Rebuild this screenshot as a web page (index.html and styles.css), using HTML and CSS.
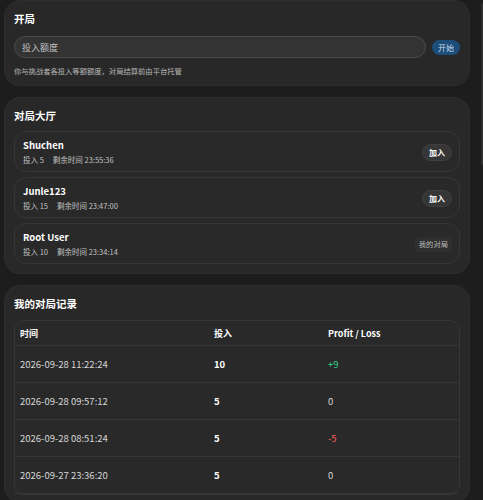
FILE: index.html
```html
<!DOCTYPE html>
<html lang="zh-CN">
<head>
    <meta charset="UTF-8">
    <title>对局</title>
    <link rel="stylesheet" href="styles.css">
</head>
<body>
    <div class="page">
        <main class="main">
            <!-- 开局 -->
            <section class="card card-start">
                <h2 class="card-title">开局</h2>
                <div class="start-row">
                    <input class="amount-input" type="text" placeholder="投入额度">
                    <button class="start-button">开始</button>
                </div>
                <p class="hint">你与挑战者各投入等额额度，对局结算前由平台托管</p>
            </section>

            <!-- 对局大厅 -->
            <section class="card">
                <h2 class="card-title">对局大厅</h2>
                <div class="lobby-list">
                    <div class="lobby-item">
                        <div class="lobby-info">
                            <div class="lobby-name">Shuchen</div>
                            <div class="lobby-meta"><span>投入 5</span><span>剩余时间 23:55:36</span></div>
                        </div>
                        <button class="join-button">加入</button>
                    </div>
                    <div class="lobby-item">
                        <div class="lobby-info">
                            <div class="lobby-name">Junle123</div>
                            <div class="lobby-meta"><span>投入 15</span><span>剩余时间 23:47:00</span></div>
                        </div>
                        <button class="join-button">加入</button>
                    </div>
                    <div class="lobby-item">
                        <div class="lobby-info">
                            <div class="lobby-name">Root User</div>
                            <div class="lobby-meta"><span>投入 10</span><span>剩余时间 23:34:14</span></div>
                        </div>
                        <span class="own-tag">我的对局</span>
                    </div>
                </div>
            </section>

            <!-- 我的对局记录 -->
            <section class="card card-history">
                <h2 class="card-title">我的对局记录</h2>
                <table class="history">
                    <thead>
                        <tr>
                            <th class="col-time">时间</th>
                            <th class="col-amount">投入</th>
                            <th>Profit / Loss</th>
                        </tr>
                    </thead>
                    <tbody>
                        <tr>
                            <td>2026-09-28 11:22:24</td>
                            <td class="amount">10</td>
                            <td class="win">+9</td>
                        </tr>
                        <tr>
                            <td>2026-09-28 09:57:12</td>
                            <td class="amount">5</td>
                            <td>0</td>
                        </tr>
                        <tr>
                            <td>2026-09-28 08:51:24</td>
                            <td class="amount">5</td>
                            <td class="loss">-5</td>
                        </tr>
                        <tr>
                            <td>2026-09-27 23:36:20</td>
                            <td class="amount">5</td>
                            <td>0</td>
                        </tr>
                    </tbody>
                </table>
            </section>
        </main>

        <aside class="side">
            <section class="card side-card"></section>
        </aside>
    </div>
</body>
</html>
```

FILE: styles.css
```css
body {
    margin: 0;
    padding: 0;
    height: 500px;
    overflow: hidden;
    background: #1d1d1d;
    font-family: 'Noto Sans CJK SC', 'Noto Sans', sans-serif;
    color: #ffffff;
}

.page {
    display: grid;
    grid-template-columns: 466px 1fr;
    gap: 11px;
    padding-left: 4px;
}

.main {
    display: flex;
    flex-direction: column;
    gap: 11px;
}

.card {
    background: #282828;
    border: 1px solid #2e2e2e;
    border-radius: 16px;
    padding: 9px;
}

.card-title {
    margin: 0 0 6px;
    font-size: 10.5px;
    line-height: 18px;
    font-weight: 700;
}

.card-start {
    padding-bottom: 7px;
}

.card-start .card-title {
    margin-bottom: 8px;
}

.start-row {
    display: flex;
    align-items: center;
    gap: 6px;
}

.amount-input {
    flex: 1;
    height: 22px;
    box-sizing: border-box;
    padding: 0 7px;
    border: 1px solid #4a4a4a;
    border-radius: 11px;
    background: #333333;
    color: #ffffff;
    font-family: inherit;
    font-size: 9px;
    outline: none;
}

.amount-input::placeholder {
    color: #c2c2c2;
}

.start-button {
    width: 28px;
    height: 15px;
    padding: 0;
    border: none;
    border-radius: 8px;
    background: #1d4e7a;
    color: #c6d9ea;
    font-family: inherit;
    font-size: 8px;
    line-height: 15px;
    cursor: pointer;
}

.hint {
    margin: 6px 0 0;
    font-size: 7.3px;
    line-height: 14px;
    color: #b8b8b8;
}

.lobby-list {
    display: flex;
    flex-direction: column;
    gap: 5px;
}

.lobby-item {
    display: flex;
    align-items: center;
    justify-content: space-between;
    padding: 6px 7px 4px 8px;
    border: 1px solid #363636;
    border-radius: 12px;
    background: #292929;
}

.lobby-name {
    font-size: 9.5px;
    line-height: 15px;
    font-weight: 700;
}

.lobby-meta {
    display: flex;
    gap: 9px;
    font-size: 7.5px;
    line-height: 14px;
    color: #c2c2c2;
}

.join-button {
    width: 30px;
    height: 17px;
    padding: 0;
    border: 1px solid #404040;
    border-radius: 9px;
    background: #363636;
    color: #ffffff;
    font-family: inherit;
    font-size: 8px;
    font-weight: 700;
    cursor: pointer;
}

.own-tag {
    padding: 0 4px;
    height: 15px;
    line-height: 15px;
    border-radius: 3px;
    background: #2f2f2f;
    color: #bbbbbb;
    font-size: 7.3px;
}

/* 记录表超出卡片底部的部分被裁掉 */
.card-history {
    height: 207px;
    overflow: hidden;
    padding-bottom: 0;
}

.card-history .card-title {
    margin-bottom: 7px;
}

.history {
    width: 100%;
    border-collapse: separate;
    border-spacing: 0;
    border: 1px solid #363636;
    border-radius: 10px;
    background: #292929;
    text-align: left;
}

.history th,
.history td {
    padding: 0 5px;
    border-bottom: 1px solid #363636;
}

.history th {
    height: 24px;
    font-size: 9px;
    font-weight: 700;
    color: #ffffff;
}

.history td {
    height: 36px;
    font-size: 9.5px;
    color: #d6d6d6;
}

.col-time {
    width: 184px;
}

.col-amount {
    width: 104px;
}

.history .amount {
    font-weight: 700;
    color: #ffffff;
}

.history .win {
    color: #2fd68f;
}

.history .loss {
    color: #ff5c5c;
}

.side-card {
    margin-top: 3px;
    height: 160px;
    padding: 0;
}
```
